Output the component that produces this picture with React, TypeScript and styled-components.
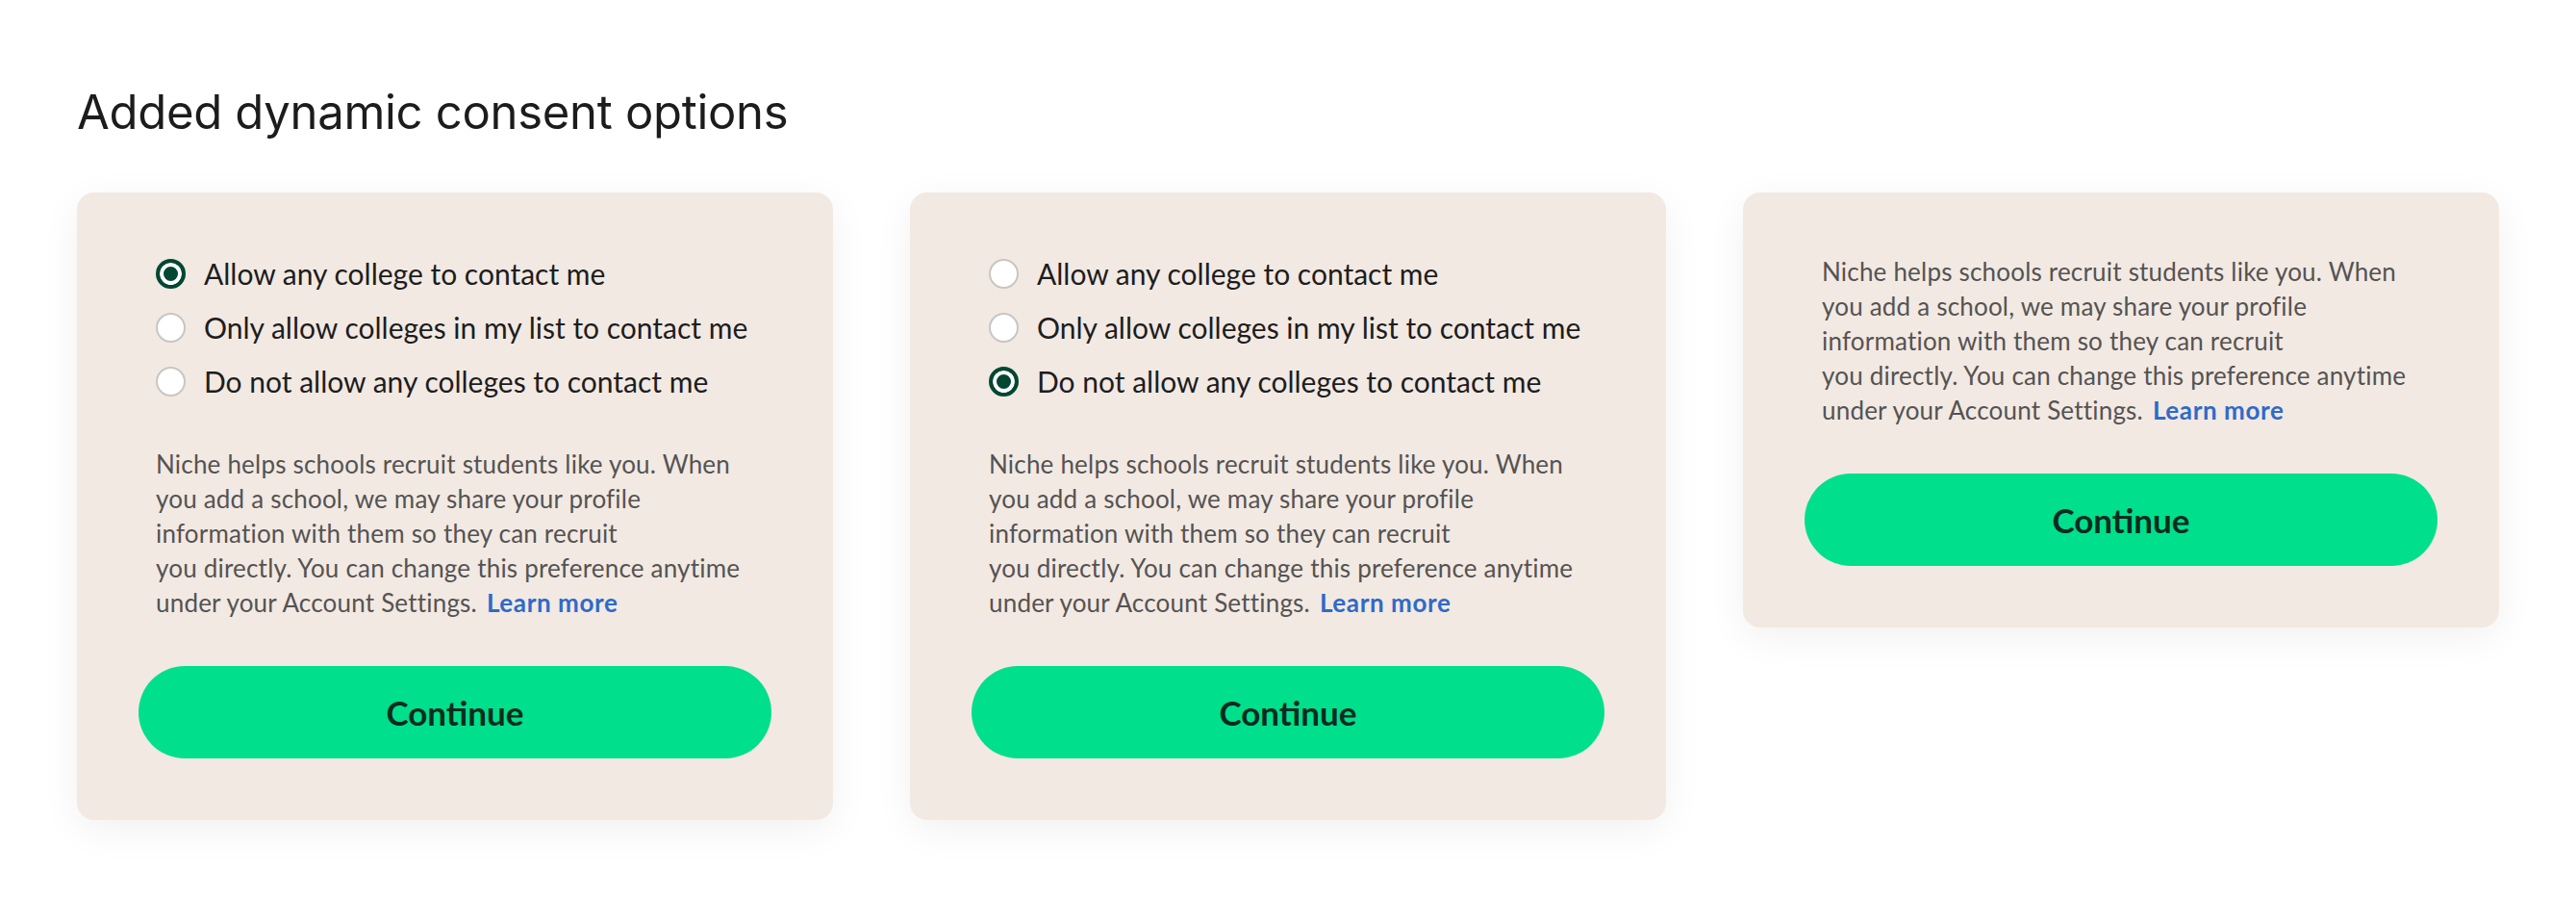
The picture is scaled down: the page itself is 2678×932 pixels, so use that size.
import styled, { createGlobalStyle } from 'styled-components'

const GlobalStyle = createGlobalStyle`
  body {
    margin: 0;
    background: #ffffff;
  }
`

type Option = {
  label: string
}

const options: Option[] = [
  { label: 'Allow any college to contact me' },
  { label: 'Only allow colleges in my list to contact me' },
  { label: 'Do not allow any colleges to contact me' },
]

const Page = styled.div`
  padding: 87px 80px 80px;
  font-family: Lato, 'Noto Sans', sans-serif;
`

const Title = styled.h1`
  margin: 0 0 53px;
  font-family: Inter, 'Liberation Sans', sans-serif;
  font-size: 49px;
  font-weight: 400;
  line-height: 60px;
  color: #1c1c1c;
  letter-spacing: -0.3px;
`

const CardRow = styled.div`
  display: grid;
  grid-template-columns: repeat(3, 1fr);
  gap: 80px;
  align-items: start;
`

const Card = styled.div`
  display: flex;
  flex-direction: column;
  padding: 64px;
  background: #f2e9e3;
  border-radius: 18px;
  box-shadow: 0 10px 40px rgba(0, 0, 0, 0.06);
`

const RadioGroup = styled.div`
  display: flex;
  flex-direction: column;
  gap: 16px;
  padding-left: 18px;
  margin-bottom: 48px;
`

const RadioRow = styled.label`
  display: flex;
  align-items: center;
  gap: 19px;
  height: 40px;
  font-size: 30px;
  color: #1d1d1d;
  white-space: nowrap;
`

const RadioCircle = styled.span<{ checked?: boolean }>`
  flex: none;
  box-sizing: border-box;
  width: 31px;
  height: 31px;
  border-radius: 50%;
  ${({ checked }) =>
    checked
      ? `
    background: #024731;
    border: 4px solid #024731;
    box-shadow: inset 0 0 0 4px #ffffff;
  `
      : `
    background: #ffffff;
    border: 2px solid #c9c5c2;
  `}
`

const Blurb = styled.p`
  margin: 0 0 48px;
  padding-left: 18px;
  font-size: 26px;
  line-height: 36px;
  color: #555352;
  letter-spacing: 0.2px;
  white-space: nowrap;
`

const LearnMore = styled.a`
  margin-left: 10px;
  color: #2f6ac8;
  font-weight: 700;
  letter-spacing: 0.6px;
  text-decoration: none;
`

const ContinueButton = styled.button`
  height: 96px;
  border: none;
  border-radius: 48px;
  background: #00df8b;
  color: #0c2b20;
  font-family: Lato, 'Noto Sans', sans-serif;
  font-size: 35px;
  font-weight: 700;
  cursor: pointer;
`

const Explanation = () => (
  <Blurb>
    Niche helps schools recruit students like you. When
    <br />
    you add a school, we may share your profile
    <br />
    information with them so they can recruit
    <br />
    you directly. You can change this preference anytime
    <br />
    under your Account Settings.
    <LearnMore href="#">Learn more</LearnMore>
  </Blurb>
)

const ConsentCard = ({ selected }: { selected?: number }) => (
  <Card>
    {selected !== undefined && (
      <RadioGroup>
        {options.map((o, i) => (
          <RadioRow key={o.label}>
            <RadioCircle checked={i === selected} />
            {o.label}
          </RadioRow>
        ))}
      </RadioGroup>
    )}
    <Explanation />
    <ContinueButton>Continue</ContinueButton>
  </Card>
)

export default function App() {
  return (
    <Page>
      <GlobalStyle />
      <Title>Added dynamic consent options</Title>
      <CardRow>
        <ConsentCard selected={0} />
        <ConsentCard selected={2} />
        <ConsentCard />
      </CardRow>
    </Page>
  )
}
